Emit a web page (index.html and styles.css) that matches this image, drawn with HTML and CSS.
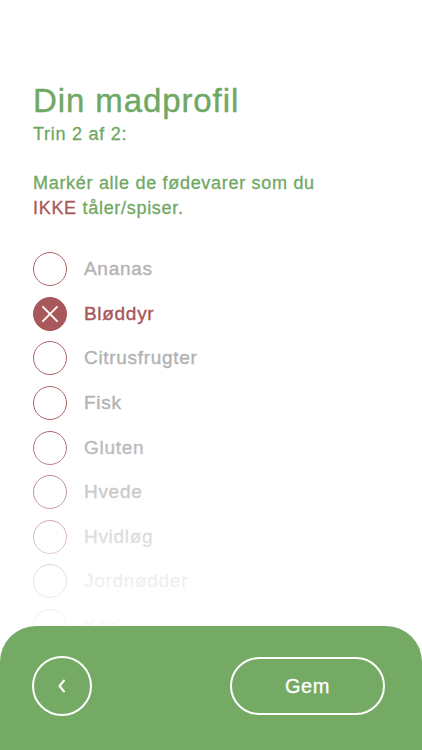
FILE: index.html
```html
<!DOCTYPE html>
<html lang="da">
<head>
<meta charset="utf-8">
<title>Din madprofil</title>
<link rel="stylesheet" href="styles.css">
</head>
<body>
<div class="screen">
  <main class="content">
    <h1 class="title">Din madprofil</h1>
    <p class="step">Trin 2 af 2:</p>
    <p class="intro">Markér alle de fødevarer som du<br><span class="neg">IKKE</span> tåler/spiser.</p>
    <ul class="list">
      <li class="item"><span class="check"></span><span class="label">Ananas</span></li>
      <li class="item selected"><span class="check"><svg viewBox="0 0 34 34" width="34" height="34"><path d="M9.5 9.5 L24.5 24.5 M24.5 9.5 L9.5 24.5" stroke="#fff" stroke-width="2" stroke-linecap="round" fill="none"/></svg></span><span class="label">Bløddyr</span></li>
      <li class="item"><span class="check"></span><span class="label">Citrusfrugter</span></li>
      <li class="item"><span class="check"></span><span class="label">Fisk</span></li>
      <li class="item"><span class="check"></span><span class="label">Gluten</span></li>
      <li class="item"><span class="check"></span><span class="label">Hvede</span></li>
      <li class="item"><span class="check"></span><span class="label">Hvidløg</span></li>
      <li class="item"><span class="check"></span><span class="label">Jordnødder</span></li>
      <li class="item"><span class="check"></span><span class="label">Kød</span></li>
    </ul>
    <div class="fade"></div>
  </main>
  <footer class="footer">
    <button class="back" aria-label="Tilbage"><svg viewBox="0 0 12 16" width="12" height="16"><path d="M8 2.5 L3.5 8 L8 13.5" stroke="#fff" stroke-width="2" stroke-linecap="round" stroke-linejoin="round" fill="none"/></svg></button>
    <button class="save">Gem</button>
  </footer>
</div>
</body>
</html>
```
FILE: styles.css
```css
* { box-sizing: border-box; }
html, body { margin: 0; padding: 0; background: #fff; }
body { font-family: "Liberation Sans", Arial, Helvetica, sans-serif; }

.screen {
  width: 422px;
  height: 750px;
  display: flex;
  flex-direction: column;
  overflow: hidden;
}

.content {
  position: relative;
  flex: 1;
  overflow: hidden;
  padding: 82px 34px 0 33px;
}

.title {
  margin: 0;
  font-size: 33px;
  line-height: 38px;
  font-weight: normal;
  letter-spacing: 0.9px;
  color: #6fa863;
  -webkit-text-stroke: 0.4px #6fa863;
}

.step {
  margin: 3px 0 0;
  font-size: 18px;
  line-height: 22px;
  letter-spacing: 0.75px;
  color: #6fa863;
  -webkit-text-stroke: 0.3px #6fa863;
}

.intro {
  margin: 26px 0 0;
  font-size: 18px;
  line-height: 24.5px;
  letter-spacing: 0.7px;
  color: #6fa863;
  -webkit-text-stroke: 0.3px #6fa863;
}

.neg { color: #a8575a; -webkit-text-stroke: 0.3px #a8575a; }

.list {
  list-style: none;
  margin: 27px 0 0;
  padding: 0;
}

.item {
  height: 44.6px;
  display: flex;
  align-items: center;
  gap: 17px;
}

.check {
  width: 34px;
  height: 34px;
  flex: none;
  border-radius: 50%;
  border: 1.5px solid #ad6466;
  display: flex;
  align-items: center;
  justify-content: center;
}

.check svg { display: block; }

.selected .check {
  background: #a8575a;
  border-color: #a8575a;
}

.label {
  font-size: 19px;
  letter-spacing: 0.7px;
  color: #b3b3b3;
  -webkit-text-stroke: 0.4px #b3b3b3;
  line-height: 22px;
}

.selected .label {
  color: #a8575a;
  -webkit-text-stroke: 0.4px #a8575a;
}

.fade {
  position: absolute;
  left: 0;
  right: 0;
  bottom: 0;
  height: 200px;
  background: linear-gradient(to bottom, rgba(255,255,255,0) 0%, rgba(255,255,255,0.1) 10%, rgba(255,255,255,0.3) 33%, rgba(255,255,255,0.55) 55%, rgba(255,255,255,0.8) 78%, rgba(255,255,255,0.93) 100%);
  pointer-events: none;
}

.footer {
  flex: none;
  height: 124px;
  background: #74aa64;
  border-radius: 36px 36px 0 0;
  display: flex;
  align-items: flex-start;
  justify-content: space-between;
  padding: 30px 37px 0 32px;
}

.back {
  width: 60px;
  height: 60px;
  border-radius: 50%;
  border: 2px solid #fff;
  background: transparent;
  padding: 0;
  display: flex;
  align-items: center;
  justify-content: center;
  cursor: pointer;
}

.back svg { display: block; }

.save {
  width: 155px;
  height: 58px;
  margin-top: 1px;
  border-radius: 29px;
  border: 2px solid #fff;
  background: transparent;
  color: #fff;
  font-family: "Liberation Sans", Arial, Helvetica, sans-serif;
  font-size: 20px;
  letter-spacing: 0.6px;
  -webkit-text-stroke: 0.3px #fff;
  cursor: pointer;
}
```
